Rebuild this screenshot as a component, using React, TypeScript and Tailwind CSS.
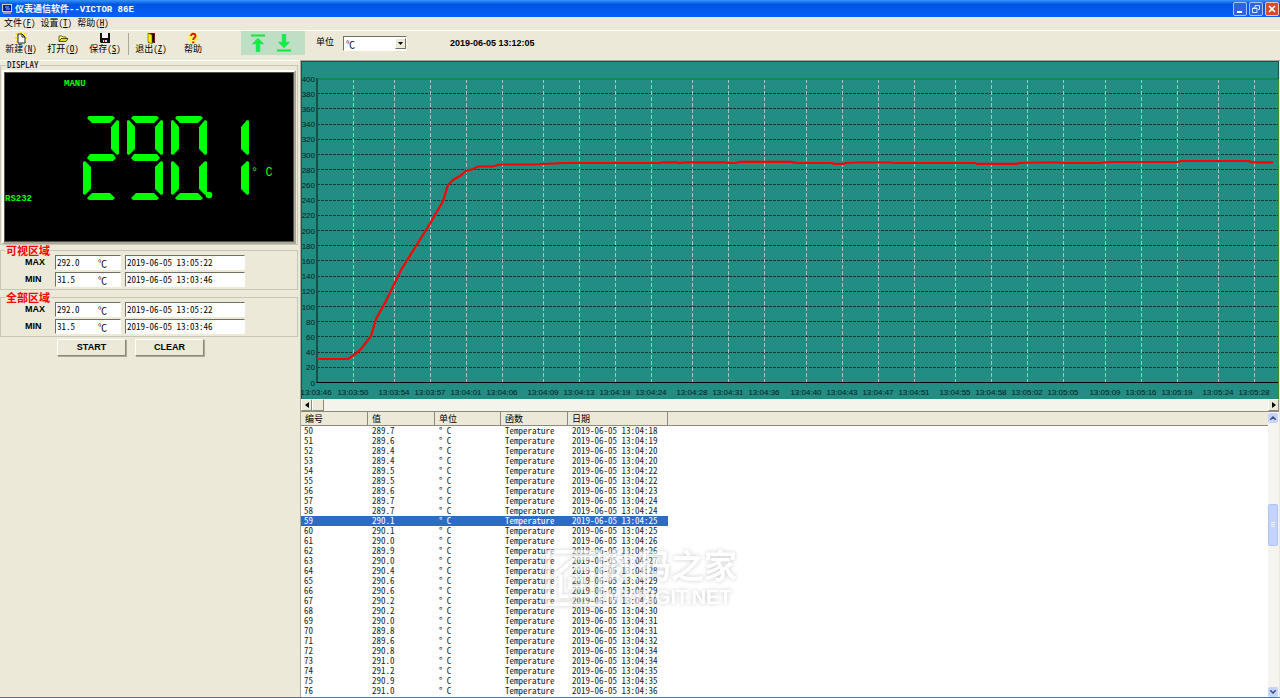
import clsx from "clsx";

const mono = "font-['Noto_Sans_Mono_CJK_SC','Liberation_Mono','Noto_Sans_CJK_SC',monospace]";
const sans = "font-['Liberation_Sans','Noto_Sans_CJK_SC',sans-serif]";

const records: [number, string, string][] = [
  [50, "289.7", "18"], [51, "289.6", "19"], [52, "289.4", "20"],
  [53, "289.4", "20"], [54, "289.5", "22"], [55, "289.5", "22"],
  [56, "289.6", "23"], [57, "289.7", "24"], [58, "289.7", "24"],
  [59, "290.1", "25"], [60, "290.1", "25"], [61, "290.0", "26"],
  [62, "289.9", "26"], [63, "290.0", "27"], [64, "290.4", "28"],
  [65, "290.6", "29"], [66, "290.6", "29"], [67, "290.2", "30"],
  [68, "290.2", "30"], [69, "290.0", "31"], [70, "289.8", "31"],
  [71, "289.6", "32"], [72, "290.8", "34"], [73, "291.0", "34"],
  [74, "291.2", "35"], [75, "290.9", "35"], [76, "291.0", "36"],
];

const ticks: [number, string][] = [
  [15, "13:03:46"], [52, "13:03:50"], [93, "13:03:54"], [129, "13:03:57"],
  [165, "13:04:01"], [201, "13:04:06"], [242, "13:04:09"], [278, "13:04:13"],
  [314, "13:04:19"], [350, "13:04:24"], [391, "13:04:28"], [427, "13:04:31"],
  [463, "13:04:36"], [505, "13:04:40"], [541, "13:04:43"], [577, "13:04:47"],
  [613, "13:04:51"], [654, "13:04:55"], [690, "13:04:58"], [726, "13:05:02"],
  [762, "13:05:05"], [804, "13:05:09"], [840, "13:05:16"], [876, "13:05:19"],
  [917, "13:05:24"], [953, "13:05:28"],
];

const curve =
  "16,298 47,298 53,294 60,288 70,275 75,258 85,240 100,209 120,177 130,161 142,140 147,124 152,119 159,115 165,110 172,108 177,105.5 191,105.5 199,103.5 232,103.5 253,102.5 263,102 359,102 361,101.3 376,101.3 378,102 383,101.3 424,101.3 427,102 435,102 439,100.8 490,100.8 496,101.8 531,102 533,102.8 543,102.8 545,102 556,101.5 591,101.5 593,102 674,102 676,102.8 716,102.8 718,102 741,101.5 759,101.5 761,102 800,102 802,101.5 812,101 877,101 879,100 948,100 951,101.3 972,101.3";

const segments: Record<string, string> = {
  a: "4,2 6,0 30,0 32,2 27,7 9,7",
  b: "34,4 36,5 36,38 34,39 28,33 28,11",
  c: "34,45 36,46 36,78 34,79 28,73 28,51",
  d: "4,82 9,77 27,77 32,82 30,84 6,84",
  e: "2,45 0,46 0,78 2,79 8,73 8,51",
  f: "2,4 0,5 0,38 2,39 8,33 8,11",
  g: "7,38 30,38 33,42 30,45 7,45 4,42",
};

const digits: [number, string][] = [
  [0, "abged"],
  [44, "abfgcd"],
  [88, "abcdef"],
  [130, "bc"],
];

function TitleBar() {
  return (
    <header className="flex h-[17px] shrink-0 items-center bg-linear-to-b from-[#3a93ff] via-[#0054e3] via-25% to-[#0660f8] pl-[2px] pr-px text-white">
      <svg width="10" height="12" viewBox="0 0 10 12">
        <rect x="0" y="1" width="10" height="8" fill="#d8d4c4" />
        <rect x="1" y="2" width="8" height="6" fill="#1414a8" />
        <path d="M3 4h4M4 6h4" stroke="#8fc0ff" />
        <rect x="1" y="9" width="8" height="2" fill="#9d9a8c" />
      </svg>
      <h1 className="ml-[3px] flex-1 whitespace-pre pt-[2px] font-['Liberation_Mono','Noto_Sans_CJK_SC',monospace] text-[9px] leading-[12px] font-bold">
        仪表通信软件--VICTOR 86E
      </h1>
      <div className="flex gap-[2px]">
        <button aria-label="最小化" className="size-[14px] rounded-[2px] border border-[#a9c4fb] bg-[#2f62e0]">
          <svg viewBox="0 0 12 12">
            <path d="M3 9h5" stroke="#fff" strokeWidth="2" />
          </svg>
        </button>
        <button aria-label="还原" className="size-[14px] rounded-[2px] border border-[#a9c4fb] bg-[#2f62e0]">
          <svg viewBox="0 0 12 12" fill="none" stroke="#dbe6ff">
            <path d="M5 4.500V2.500h4.500v4H8M2.500 5h4.500v4.500H2.500zM2.500 5.500h4.500" />
          </svg>
        </button>
        <button aria-label="关闭" className="size-[14px] rounded-[2px] border border-[#f3c5b5] bg-[#dc4a26]">
          <svg viewBox="0 0 12 12">
            <path d="M3 3l6 6M9 3l-6 6" stroke="#fff" strokeWidth="1.600" />
          </svg>
        </button>
      </div>
    </header>
  );
}

function MenuBar() {
  const items = [["文件", "F"], ["设置", "T"], ["帮助", "H"]];
  return (
    <nav className={clsx("flex h-[13px] shrink-0 items-center gap-[5px] px-1 pb-[2px] text-[9px] leading-none", mono)}>
      {items.map(([name, key]) => (
        <button key={key}>
          {name}(<u>{key}</u>)
        </button>
      ))}
    </nav>
  );
}

interface ToolProps {
  name: string;
  hotkey?: string;
  children: React.ReactNode;
}

function Tool({ name, hotkey, children }: ToolProps) {
  return (
    <button className="flex w-[42px] flex-col items-center text-[9px] leading-[10px]">
      <svg width="12" height="12" viewBox="0 0 12 12">
        {children}
      </svg>
      <span className="whitespace-nowrap">
        {name}
        {hotkey && <>(<u>{hotkey}</u>)</>}
      </span>
    </button>
  );
}

function Toolbar() {
  return (
    <div className="flex h-[30px] shrink-0 border-t border-white">
      <div className={clsx("flex items-start pt-px", mono)}>
        <Tool name="新建" hotkey="N">
          <path d="M1 1l10 10M11 1L1 11M6 0v12M0 6h12" stroke="#ffe800" strokeWidth="2" />
          <path d="M3 2h4l3 3v6H3z" fill="#fff" stroke="#222" />
          <path d="M7 2v3h3" fill="none" stroke="#222" />
        </Tool>
        <Tool name="打开" hotkey="O">
          <path d="M2 9V4h3l1 1h3v2" fill="#ffff9c" stroke="#6b6b00" />
          <path d="M2 9.500l2-3h7l-2 3z" fill="#e8e000" stroke="#555500" />
        </Tool>
        <Tool name="保存" hotkey="S">
          <path d="M1 1h10v10H2L1 10z" fill="#111" />
          <path d="M3 1h6v5H3z" fill="#f4f4ff" />
          <path d="M4 8h4v2H4z" fill="#ddd" />
          <path d="M5 8h1v2H5z" fill="#b01010" />
        </Tool>
        <div className="mt-px mr-px ml-[2px] h-[22px] w-px bg-[#aca899]" />
        <Tool name="退出" hotkey="Z">
          <path d="M3 1h7v10H3z" fill="#7a1010" />
          <path d="M7 2h2v8H7z" fill="#111" />
          <path d="M3 1l4 2v9l-4-2z" fill="#ffee00" stroke="#555500" strokeWidth=".600" />
        </Tool>
        <Tool name="帮助">
          <circle cx="6" cy="6" r="5.500" fill="#ffef6a" />
          <path d="M4 4c0-3 4.500-3 4.500 0 0 2-2.300 1.500-2.300 4" fill="none" stroke="#e01010" strokeWidth="1.800" />
          <path d="M5.200 9.500h2v1.800h-2z" fill="#e01010" />
        </Tool>
      </div>
      <div className="ml-[27px] flex h-[24px] w-16 items-center justify-center gap-[10px] bg-[#bfdfc4] pr-1">
        <button aria-label="上限">
          <svg width="16" height="18" viewBox="0 0 16 18">
            <path d="M1 1.500h14" stroke="#10e838" strokeWidth="2" />
            <path d="M8 4l6 6h-4v8H6v-8H2z" fill="#10f040" stroke="#5cc8a0" strokeWidth=".500" />
          </svg>
        </button>
        <button aria-label="下限">
          <svg width="16" height="18" viewBox="0 0 16 18">
            <path d="M1 16.500h14" stroke="#10e838" strokeWidth="2" />
            <path d="M8 14l6-6h-4V0H6v8H2z" fill="#10f040" stroke="#5cc8a0" strokeWidth=".500" />
          </svg>
        </button>
      </div>
      <label htmlFor="unit" className={clsx("ml-[11px] mt-[6px] text-[9px] leading-[10px]", mono)}>
        单位
      </label>
      <div className="relative ml-[9px] mt-[5px] h-[15px] w-16">
        <select
          id="unit"
          className={clsx("block h-[15px] w-full appearance-none border border-[#fffefa] border-t-[#716f64] border-l-[#716f64] bg-white pt-px pl-[2px] text-[9px] leading-none", mono)}
        >
          <option>℃</option>
        </select>
        <span className="pointer-events-none absolute top-[2px] right-px flex h-[11px] w-[11px] items-center justify-center border border-white border-r-[#716f64] border-b-[#716f64] bg-[#ece9d8]">
          <svg width="5" height="3" viewBox="0 0 5 3">
            <path d="M0 0h5L2.500 3z" />
          </svg>
        </span>
      </div>
      <time className={clsx("ml-[43px] mt-[6px] text-[9px] leading-[12px] font-bold", sans)}>
        2019-06-05 13:12:05
      </time>
    </div>
  );
}

function Display() {
  return (
    <fieldset className="mr-[2px] border border-[#c9c5b6] px-px">
      <legend className={clsx("ml-1 px-px text-[9px] leading-[8px]", mono)}>DISPLAY</legend>
      <div className="mt-px border-2 border-[#fffefa] border-r-[#aca899] border-b-[#aca899]">
        <div className="flex h-[170px] flex-col border border-[#55524a] bg-black text-[#00ff00]">
          <p className="mt-[6px] ml-[59px] font-['Liberation_Mono',monospace] text-[9px] leading-[10px] font-bold">MANU</p>
          <div className="mt-[27px] flex">
            <p className="mb-[-3px] w-[78px] self-end font-['Liberation_Mono',monospace] text-[9px] leading-[10px] font-bold">
              RS232
            </p>
            <svg width="168" height="85" viewBox="0 0 168 85" fill="#00ff00" role="img" aria-label="290.1">
              {digits.map(([x, on]) => (
                <g key={x} transform={`translate(${x} 0)`}>
                  {on.split("").map((s) => (
                    <polygon key={s} points={segments[s]} />
                  ))}
                </g>
              ))}
              <circle cx="126" cy="79" r="3.300" />
            </svg>
            <p className="mt-[50px] whitespace-pre font-['Liberation_Mono',monospace] text-[12px] leading-[14px]">° C</p>
          </div>
        </div>
      </div>
    </fieldset>
  );
}

const sunken = "h-[15px] border border-[#fffefa] border-t-[#716f64] border-l-[#716f64] bg-white";

function Range({ id, title }: { id: string; title: string }) {
  const rows = [
    ["MAX", "292.0", "2019-06-05 13:05:22"],
    ["MIN", "31.5", "2019-06-05 13:03:46"],
  ];
  return (
    <fieldset className="mr-[2px] border border-[#c9c5b6] pb-[2px]">
      <legend className="ml-1 px-px font-['Noto_Sans_CJK_SC',sans-serif] text-[11px] leading-[10px] font-bold text-[#ff0000]">
        {title}
      </legend>
      <div className="flex flex-col gap-[2px]">
        {rows.map(([name, value, time]) => (
          <div key={name} className="flex items-center">
            <label htmlFor={id + name} className={clsx("w-[54px] pl-6 text-[9px] font-bold", sans)}>
              {name}
            </label>
            <div className={clsx("flex w-[66px] items-center", sunken, mono)}>
              <input id={id + name} readOnly defaultValue={value} className="w-[42px] pl-px text-[9px] leading-[13px] outline-none" />
              <span className="pt-[2px] text-[9px] leading-[11px]">℃</span>
            </div>
            <input
              aria-label={`${name} 日期`}
              readOnly
              defaultValue={time}
              className={clsx("ml-1 w-[120px] pl-px text-[9px] leading-[13px] outline-none", sunken, mono)}
            />
          </div>
        ))}
      </div>
    </fieldset>
  );
}

function Chart() {
  const levels = Array.from({ length: 21 }, (_, i) => i * 20);
  const y = (v: number) => 321.5 - v * 0.76;
  return (
    <svg viewBox="0 0 978 338" className={clsx("block w-full bg-[#228d82]", sans)} fontSize="8">
      <path d="M0 .500h978M.500 0v338M977.500 0v18" stroke="#1f4f4a" />
      {levels.slice(1, 20).map((v) => (
        <line key={v} x1="16" x2="977" y1={Math.floor(y(v)) + 0.5} y2={Math.floor(y(v)) + 0.5} stroke="#0b3a36" strokeDasharray="3 1" />
      ))}
      {ticks.slice(1).map(([x]) => (
        <g key={x}>
          <line x1={x + 0.5} x2={x + 0.5} y1="18" y2="321" stroke="#a9c4be" strokeDasharray="4 2" />
          <line x1={x + 0.5} x2={x + 0.5} y1="322" y2="325" stroke="#4c6f69" />
        </g>
      ))}
      <path d="M16 18h961" stroke="#128a4c" strokeWidth="2" />
      <path d="M977.500 18v320" stroke="#3f8a2c" />
      <path d="M16 17v305" stroke="#15504a" strokeWidth="2" />
      <path d="M16 321.500h961" stroke="#000" />
      {levels.map((v) => (
        <text key={v} x="14" y={y(v) + 3} textAnchor="end" fill="#06201e">
          {v}
        </text>
      ))}
      {ticks.map(([x, label]) => (
        <text key={label} x={x} y="334" textAnchor="middle" fill="#06201e">
          {label}
        </text>
      ))}
      <polyline points={curve} fill="none" stroke="#ff0000" strokeWidth="2.200" />
    </svg>
  );
}

const raised = "flex items-center justify-center border border-white border-r-[#8d8a7c] border-b-[#8d8a7c] bg-[#ece9d8]";

function HScroll() {
  return (
    <div className="flex h-[12px] shrink-0 bg-[#f5f4ec]">
      <button aria-label="向左" className={clsx("w-[11px]", raised)}>
        <svg width="4" height="6" viewBox="0 0 4 6">
          <path d="M4 0v6L0 3z" />
        </svg>
      </button>
      <div className={clsx("w-[12px]", raised)} />
      <button aria-label="向右" className={clsx("ml-auto w-[11px]", raised)}>
        <svg width="4" height="6" viewBox="0 0 4 6">
          <path d="M0 0v6l4-3z" />
        </svg>
      </button>
    </div>
  );
}

function VScroll() {
  const btn = "flex h-[10px] w-[10px] items-center justify-center rounded-[2px] bg-[#c3d3fd]";
  return (
    <div className="flex w-[11px] shrink-0 flex-col bg-[#f5f4ef] pt-px">
      <button aria-label="向上" className={btn}>
        <svg width="6" height="4" viewBox="0 0 6 4" fill="none" stroke="#3c5287" strokeWidth="1.500">
          <path d="M0 4l3-3 3 3" />
        </svg>
      </button>
      <div className="grow-80 basis-0" />
      <div className="flex h-[42px] w-[10px] items-center justify-center rounded-[2px] border border-[#b0c4f4] bg-[#c3d3fd]">
        <svg width="4" height="5" viewBox="0 0 4 5">
          <path d="M0 .500h4M0 2.500h4M0 4.500h4" stroke="#eef4ff" />
        </svg>
      </div>
      <div className="grow-140 basis-0" />
      <button aria-label="向下" className={btn}>
        <svg width="6" height="4" viewBox="0 0 6 4" fill="none" stroke="#3c5287" strokeWidth="1.500">
          <path d="M0 0l3 3 3-3" />
        </svg>
      </button>
    </div>
  );
}

function Records() {
  const heads = ["编号", "值", "单位", "函数", "日期"];
  return (
    <div className="relative flex min-h-0 flex-1 overflow-hidden border-t border-[#8d8a7c] bg-white">
      <div className="min-w-0 flex-1">
        <table className={clsx("w-full table-fixed border-separate border-spacing-0 text-[9px] leading-[10px]", mono)}>
          <colgroup>
            <col className="w-[67px]" />
            <col className="w-[67px]" />
            <col className="w-[66px]" />
            <col className="w-[67px]" />
            <col className="w-[100px]" />
            <col />
          </colgroup>
          <thead className="bg-[#ece9d8] text-left">
            <tr className="h-[14px]">
              {heads.map((h) => (
                <th key={h} className="border-r border-b border-[#8d8a7c] p-0 pl-1 font-normal">
                  {h}
                </th>
              ))}
              <td className="border-b border-[#8d8a7c] p-0" />
            </tr>
          </thead>
          <tbody className="whitespace-pre text-[#222]">
            {records.map(([no, value, sec]) => {
              const cell = clsx("h-[10px] p-0 pl-1", no === 59 && "bg-[#316ac5] text-white");
              return (
                <tr key={no}>
                  <td className={clsx("h-[10px] p-0 pl-[3px]", no === 59 && "bg-[#316ac5] text-white")}>{no}</td>
                  <td className={cell}>{value}</td>
                  <td className={cell}>° C</td>
                  <td className={cell}>Temperature</td>
                  <td className={cell}>2019-06-05 13:04:{sec}</td>
                  <td className="p-0" />
                </tr>
              );
            })}
          </tbody>
        </table>
      </div>
      <VScroll />
      <Watermark />
    </div>
  );
}

function Watermark() {
  return (
    <div className="pointer-events-none absolute top-[136px] left-[243px] flex items-center gap-px opacity-60 drop-shadow-[0_0_2px_#aaa]">
      <svg width="60" height="58" viewBox="0 0 60 60" fill="none" stroke="#fff" strokeWidth="4">
        <path d="M3 3h54v54H3z" />
        <path d="M10 28L32 9h17M16 26v23h33V20H30M26 31h13v9H26z" />
      </svg>
      <div className={clsx("font-bold text-white", sans)}>
        <p className="text-[33px] leading-[38px]">数码之家</p>
        <p className="text-[20px] leading-[22px]">MYDIGIT.NET</p>
      </div>
    </div>
  );
}

export default function App() {
  const button = clsx(
    "h-[17px] w-[69px] border border-white border-r-[#8d8a7c] border-b-[#8d8a7c] bg-[#ece9d8] text-[9px] leading-none font-bold shadow-[1px_1px_0_#aca899]",
    sans
  );
  return (
    <div className="flex h-screen flex-col overflow-hidden border-b border-[#4a78c0] bg-[#ece9d8] text-black">
      <TitleBar />
      <MenuBar />
      <Toolbar />
      <main className="flex min-h-0 flex-1">
        <aside className="w-[300px] shrink-0 border-t border-white">
          <Display />
          <Range id="visible" title="可视区域" />
          <div className="mt-[2px]">
            <Range id="all" title="全部区域" />
          </div>
          <div className="mt-[2px] ml-[57px] flex gap-[9px]">
            <button className={button}>START</button>
            <button className={button}>CLEAR</button>
          </div>
        </aside>
        <section className="flex min-w-0 flex-1 flex-col border-t border-l border-[#aca899] pr-px">
          <Chart />
          <HScroll />
          <Records />
        </section>
      </main>
    </div>
  );
}
